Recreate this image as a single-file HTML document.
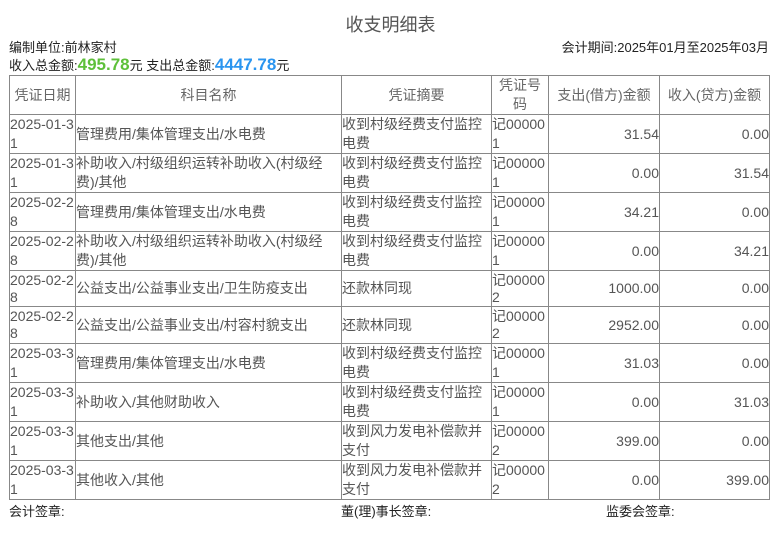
<!DOCTYPE html>
<html><head><meta charset="utf-8"><style>
body{margin:0;width:781px;height:533px;background:#fff;font-family:"Liberation Sans","Noto Sans CJK SC",sans-serif;color:#222;font-size:13px;position:relative;overflow:hidden}
.a{position:absolute;white-space:nowrap}
table{position:absolute;left:9px;top:75px;border-collapse:collapse;table-layout:fixed;width:760px}
td,th{border:1px solid #888;padding:0;font-size:14px;line-height:19px;color:#555;font-weight:normal;overflow:hidden;word-break:break-all;vertical-align:middle}
th{color:#666;text-align:center}
td.r{text-align:right}
</style></head><body>
<div class="a" style="left:0;width:781px;text-align:center;top:11px;font-size:18px;color:#555">收支明细表</div>
<div class="a" style="left:9px;top:37px">编制单位:前林家村</div>
<div class="a" style="right:12px;top:37px">会计期间:2025年01月至2025年03月</div>
<div class="a" style="left:9px;top:55px">收入总金额:<b style="color:#5ec03a;font-size:17px">495.78</b>元 支出总金额:<b style="color:#2a95f0;font-size:17px">4447.78</b>元</div>
<table>
<colgroup><col style="width:66px"><col style="width:266px"><col style="width:150px"><col style="width:57px"><col style="width:111px"><col style="width:110px"></colgroup>
<tr style="height:39px"><th>凭证日期</th><th>科目名称</th><th>凭证摘要</th><th>凭证号<br>码</th><th>支出(借方)金额</th><th>收入(贷方)金额</th></tr>
<tr style="height:39px"><td>2025-01-31</td><td>管理费用/集体管理支出/水电费</td><td>收到村级经费支付监控电费</td><td>记000001</td><td class="r">31.54</td><td class="r">0.00</td></tr>
<tr style="height:39px"><td>2025-01-31</td><td>补助收入/村级组织运转补助收入(村级经费)/其他</td><td>收到村级经费支付监控电费</td><td>记000001</td><td class="r">0.00</td><td class="r">31.54</td></tr>
<tr style="height:39px"><td>2025-02-28</td><td>管理费用/集体管理支出/水电费</td><td>收到村级经费支付监控电费</td><td>记000001</td><td class="r">34.21</td><td class="r">0.00</td></tr>
<tr style="height:39px"><td>2025-02-28</td><td>补助收入/村级组织运转补助收入(村级经费)/其他</td><td>收到村级经费支付监控电费</td><td>记000001</td><td class="r">0.00</td><td class="r">34.21</td></tr>
<tr style="height:36px"><td style="line-height:17px">2025-02-28</td><td>公益支出/公益事业支出/卫生防疫支出</td><td>还款林同现</td><td style="line-height:17px">记000002</td><td class="r">1000.00</td><td class="r">0.00</td></tr>
<tr style="height:37px"><td style="line-height:17px">2025-02-28</td><td>公益支出/公益事业支出/村容村貌支出</td><td>还款林同现</td><td style="line-height:17px">记000002</td><td class="r">2952.00</td><td class="r">0.00</td></tr>
<tr style="height:39px"><td>2025-03-31</td><td>管理费用/集体管理支出/水电费</td><td>收到村级经费支付监控电费</td><td>记000001</td><td class="r">31.03</td><td class="r">0.00</td></tr>
<tr style="height:39px"><td>2025-03-31</td><td>补助收入/其他财助收入</td><td>收到村级经费支付监控电费</td><td>记000001</td><td class="r">0.00</td><td class="r">31.03</td></tr>
<tr style="height:38px"><td>2025-03-31</td><td>其他支出/其他</td><td>收到风力发电补偿款并支付</td><td>记000002</td><td class="r">399.00</td><td class="r">0.00</td></tr>
<tr style="height:39px"><td>2025-03-31</td><td>其他收入/其他</td><td>收到风力发电补偿款并支付</td><td>记000002</td><td class="r">0.00</td><td class="r">399.00</td></tr>
</table>
<div class="a" style="left:9px;top:501px">会计签章:</div>
<div class="a" style="left:341px;top:501px">董(理)事长签章:</div>
<div class="a" style="left:606px;top:501px">监委会签章:</div>
</body></html>
